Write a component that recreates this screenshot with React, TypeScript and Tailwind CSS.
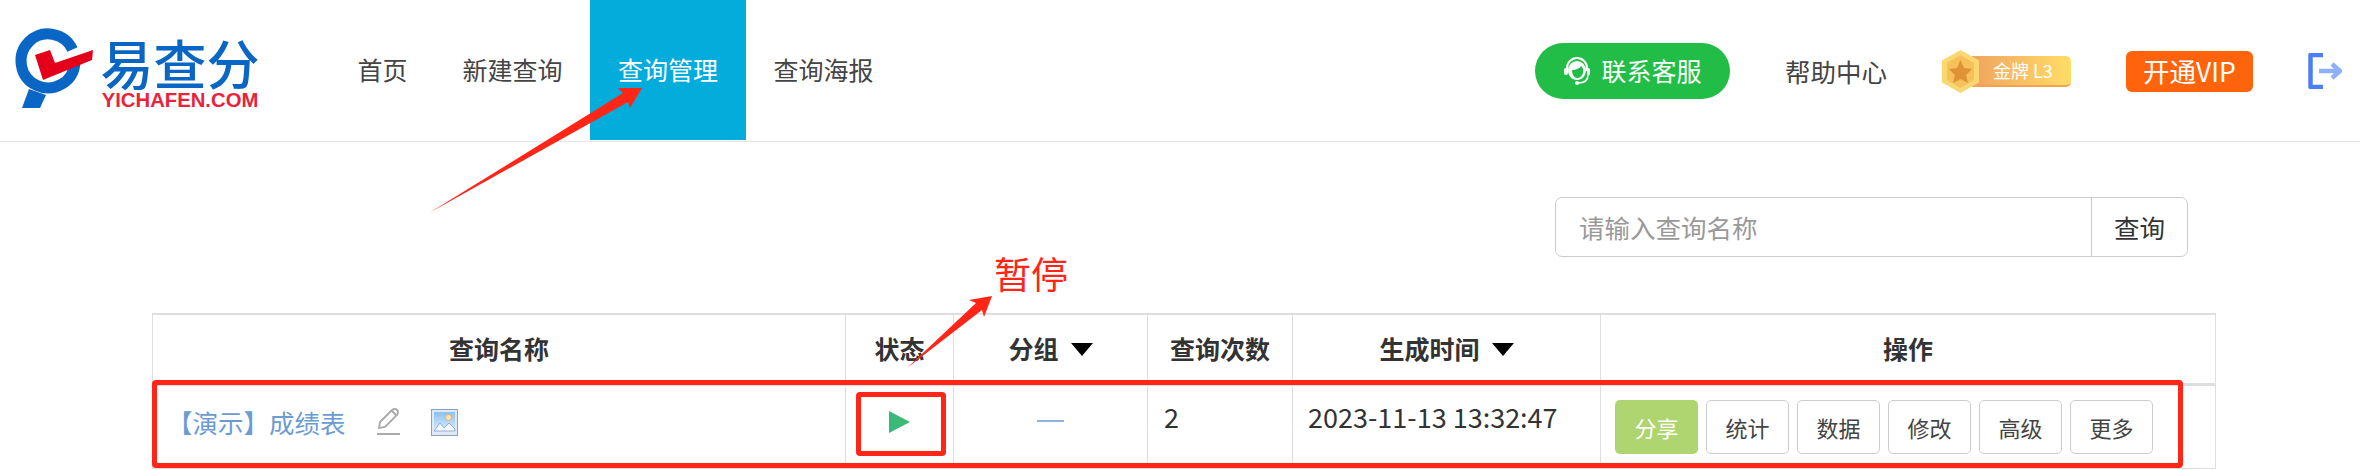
const navItems = ["首页", "新建查询", "查询管理", "查询海报"];
const actions = ["统计", "数据", "修改", "高级", "更多"];

function LogoMark() {
	return (
		<svg width="82" height="82" viewBox="15 27 82 82" className="shrink-0 overflow-visible">
			<path d="M72.5 49.5 A27 27 0 1 0 74.9 63.4" fill="none" stroke="#0a66c4" strokeWidth="11" />
			<path d="M29 89 L46 95 L40 108 L22 108 Z" fill="#0a66c4" />
			<path d="M35 55 L50 50 L55 63 L93 50 L92 60 L43 80 Z" fill="#e4001b" />
		</svg>
	);
}

function Headset() {
	return (
		<svg width="28" height="30" viewBox="0 0 28 30">
			<path d="M4 15 V12 A10 10 0 0 1 24 12 V15" fill="none" stroke="#fff" strokeWidth="2" />
			<path d="M5 14 A9 9 0 0 1 23 14 C23 20 19 24 14 24 C9 24 5 20 5 14 Z" fill="#fff" />
			<path d="M9 14 C13 14 17 12 18 10 C20 12 21 14 20 17 C19 20 17 22 14 22 C11 22 9 18 9 14 Z" fill="#22bd46" />
			<rect x="1" y="12" width="4" height="7" rx="2" fill="#fff" />
			<rect x="24" y="12" width="3" height="7" rx="1.5" fill="#fff" />
			<path d="M25 19 C25 25 21 27 15 27" fill="none" stroke="#fff" strokeWidth="1.5" />
			<circle cx="14" cy="27" r="2" fill="#fff" />
		</svg>
	);
}

function Badge() {
	return (
		<div className="flex h-[43px] w-[129px] items-center">
			<div className="relative h-[43px] w-full">
				<div className="absolute left-[30px] right-0 top-[6px] flex h-[31px] items-center rounded-r-[5px] border-b-2 border-[#f4a250] bg-gradient-to-r from-[#efa45f] to-[#ffdd66] pl-[21px] text-[18px] leading-none text-white">
					金牌 L3
				</div>
				<svg width="37" height="43" viewBox="0 0 37 43" className="absolute left-0 top-0">
					<path d="M18.5 0 L37 10.5 V32.5 L18.5 43 L0 32.5 V10.5 Z" fill="#fbd771" />
					<path d="M18.5 5 L32 13 V30 L18.5 38 L5 30 V13 Z" fill="#f6c05a" />
					<path d="M18.5 10 L22 18 L30 19 L24 25 L26 33 L18.5 29 L11 33 L13 25 L7 19 L15 18 Z" fill="#e09236" />
				</svg>
			</div>
		</div>
	);
}

function ExitIcon() {
	return (
		<svg width="34" height="36" viewBox="0 0 34 36">
			<path d="M15 2 H2.5 V34 H15" fill="none" stroke="#4c7ff6" strokeWidth="4.5" strokeLinejoin="round" />
			<path d="M11 18 H31 M24 11 L32 18 L24 25" fill="none" stroke="#8fb0fb" strokeWidth="4.5" />
		</svg>
	);
}

function PencilIcon() {
	return (
		<svg width="24" height="28" viewBox="0 0 24 28" className="shrink-0">
			<path d="M2 20 L3 14 L15 2 Q18 0 20 2 Q22 4 20 7 L8 19 Z M15 3 L20 8" fill="none" stroke="#a8a8a8" strokeWidth="1.8" />
			<rect x="0" y="25" width="23" height="2" fill="#ababab" />
		</svg>
	);
}

function PictureIcon() {
	return (
		<svg width="27" height="27" viewBox="0 0 27 27" className="shrink-0">
			<defs>
				<linearGradient id="sky" x1="0" y1="0" x2="0" y2="1">
					<stop offset="0" stopColor="#8cc0f2" />
					<stop offset="1" stopColor="#dcecfb" />
				</linearGradient>
			</defs>
			<rect x="0.5" y="0.5" width="26" height="26" fill="#dfe9f5" stroke="#8aa3bd" />
			<rect x="3" y="3" width="21" height="19" fill="url(#sky)" />
			<circle cx="17.5" cy="8.5" r="3" fill="#fde3b0" stroke="#f0a060" strokeWidth="0.8" />
			<path d="M3 22 L9 14 L13 19 L18 14 L24 20 V22 Z" fill="#f4f8fd" stroke="#7f9fca" strokeWidth="0.8" />
		</svg>
	);
}

function Caret() {
	return <span className="ml-[12px] inline-block h-0 w-0 border-x-[11px] border-t-[13px] border-x-transparent border-t-black" />;
}

export default function App() {
	return (
		<div className="relative h-[470px] w-[2360px] overflow-hidden bg-white font-['Noto_Sans_CJK_SC','Liberation_Sans',sans-serif] text-[#333]">
			<header className="flex h-[142px] items-start border-b border-[#e5e5e5]">
				<div className="flex h-[140px] w-[330px] items-start pl-[15px] pt-[27px]">
					<LogoMark />
					<div className="ml-[3px] flex w-[160px] flex-col items-center pt-[6px]">
						<div className="text-[53px] font-medium leading-[58px] text-[#0a66c4]">易查分</div>
						<div className="font-['Liberation_Sans'] text-[20.3px] font-bold leading-[18px] text-[#e8233c]">YICHAFEN.COM</div>
					</div>
				</div>
				<nav className="flex h-[140px] text-[25px]">
					{navItems.map((item) => (
						<a
							key={item}
							className={
								item === "查询管理"
									? "flex items-center bg-[#04acdc] px-[28px] text-white"
									: "flex items-center px-[27.5px] text-[#444]"
							}
						>
							{item}
						</a>
					))}
				</nav>
				<div className="ml-auto flex h-[140px] items-center gap-[55px] pr-[18px] pt-[2px]">
					<a className="flex h-[56px] w-[195px] items-center justify-center gap-[10px] rounded-[28px] bg-[#22bd46] text-[25px] text-white">
						<Headset />
						联系客服
					</a>
					<a className="text-[25.5px] text-[#444]">帮助中心</a>
					<Badge />
					<a className="flex h-[41px] w-[127px] items-center justify-center rounded-[6px] bg-[#ff640d] text-[26.5px] text-white">开通VIP</a>
					<ExitIcon />
				</div>
			</header>

			<div className="flex justify-end pr-[172px] pt-[55px]">
				<div className="flex h-[60px] w-[633px] rounded-[7px] border border-[#ccc] text-[25.5px]">
					<div className="flex flex-1 items-center pl-[23px] text-[#999]">请输入查询名称</div>
					<button className="w-[96px] border-l border-[#ccc] text-[#333]">查询</button>
				</div>
			</div>

			<div className="ml-[152px] mt-[56px] w-[2064px] border-x border-b border-t-2 border-[#dedede]">
				<div className="grid h-[71px] grid-cols-[692px_108px_194px_145px_308px_1fr] border-b-[3px] border-[#dedede] text-[25px] font-bold">
					<div className="flex items-center justify-center">查询名称</div>
					<div className="flex items-center justify-center border-l border-[#dedede]">状态</div>
					<div className="flex items-center justify-center border-l border-[#dedede]">
						分组
						<Caret />
					</div>
					<div className="flex items-center justify-center border-l border-[#dedede]">查询次数</div>
					<div className="flex items-center justify-center border-l border-[#dedede]">
						生成时间
						<Caret />
					</div>
					<div className="flex items-center justify-center border-l border-[#dedede]">操作</div>
				</div>
				<div className="grid h-[82px] grid-cols-[692px_108px_194px_145px_308px_1fr] text-[27px]">
					<div className="flex items-center pb-[10px] pl-[14px]">
						<a className="text-[25.5px] text-[#6b9bd2]">【演示】成绩表</a>
						<span className="ml-[31px] flex items-center gap-[30px]">
							<PencilIcon />
							<PictureIcon />
						</span>
					</div>
					<div className="flex items-center justify-center border-l border-[#dedede] pb-[10px]">
						<span className="h-0 w-0 border-y-[11px] border-l-[21px] border-y-transparent border-l-[#3cb878]" />
					</div>
					<div className="flex items-center justify-center border-l border-[#dedede] pb-[12px]">
						<span className="h-[2px] w-[27px] bg-[#8db4e0]" />
					</div>
					<div className="flex items-center border-l border-[#dedede] pb-[20px] pl-[16px]">2</div>
					<div className="flex items-center border-l border-[#dedede] pb-[20px] pl-[15px]">2023-11-13 13:32:47</div>
					<div className="flex items-start gap-[8px] border-l border-[#dedede] pl-[14px] pt-[14px] text-[22px]">
						<a className="flex h-[54px] w-[83px] items-center justify-center rounded-[5px] bg-[#aed56f] text-white">分享</a>
						{actions.map((action) => (
							<a key={action} className="flex h-[54px] w-[83px] items-center justify-center rounded-[5px] border border-[#ccc] text-[#444]">
								{action}
							</a>
						))}
					</div>
				</div>
			</div>

			{/* annotations drawn on top of the screenshot */}
			<div className="absolute left-[152px] top-[380px] h-[88px] w-[2031px] rounded-[4px] border-[5px] border-[#ff2618]" />
			<div className="absolute left-[856px] top-[392px] h-[64px] w-[90px] rounded-[4px] border-[5px] border-[#ff2618]" />
			<div className="absolute left-[994px] top-[248px] text-[37px] leading-[50px] text-[#ff2618]">暂停</div>
			<svg width="2360" height="470" className="pointer-events-none absolute left-0 top-0">
				<path d="M429 213 L623 93 L618 88 L642 88 L630 108 L628 102 Z" fill="#ff2618" />
				<path d="M907 368 L976 303 L969 300 L992 296 L984 317 L982 310 Z" fill="#ff2618" />
			</svg>
		</div>
	);
}
